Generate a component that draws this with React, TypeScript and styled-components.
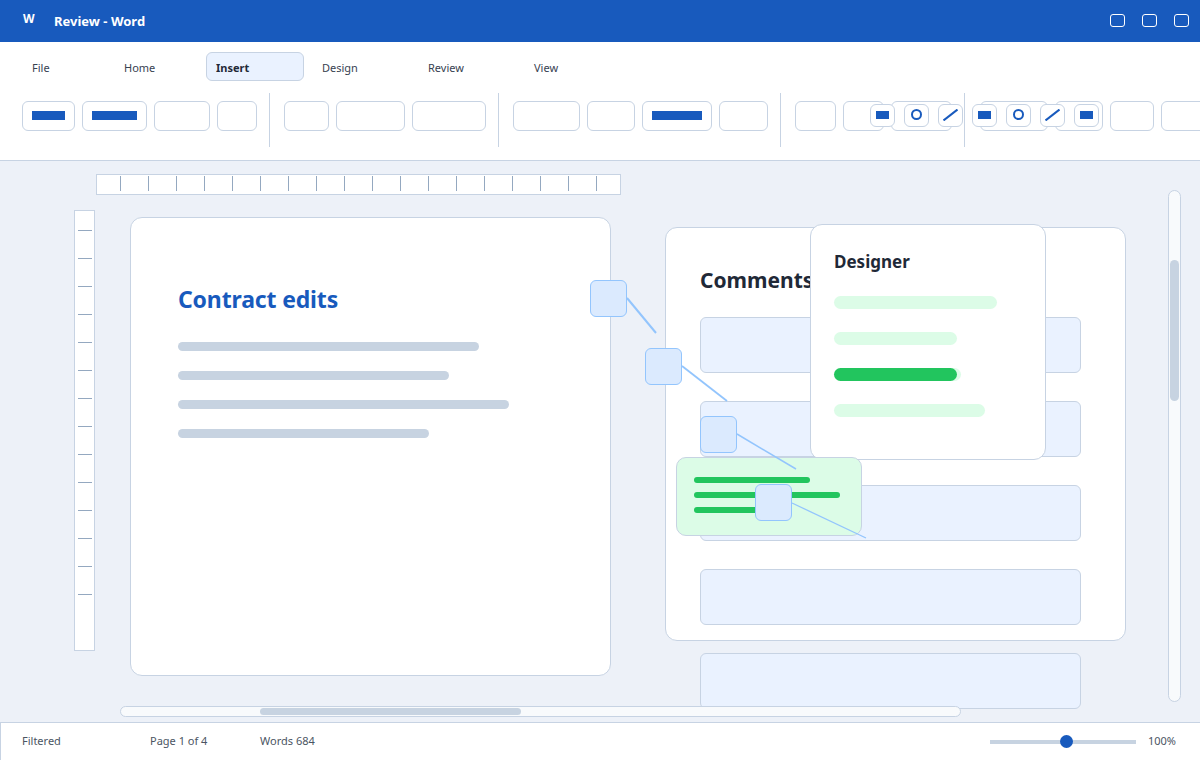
import React from 'react'
import styled, { createGlobalStyle } from 'styled-components'

const GlobalStyle = createGlobalStyle`
  html, body { margin: 0; padding: 0; background: #edf1f8; }
  body { font-family: "Noto Sans", "Open Sans", sans-serif; color: #1f2937; }
  * { box-sizing: border-box; }
`

const line = '#c7d3e3'
const blue = '#185abd'

const Shell = styled.div`
  width: 1200px;
  height: 760px;
  display: flex;
  flex-direction: column;
  overflow: hidden;
  position: relative;
`

const TitleBar = styled.header`
  height: 42px;
  flex: none;
  background: ${blue};
  color: #fff;
  display: flex;
  align-items: center;
  padding: 0 11px 0 23px;
`

const AppMark = styled.span`
  width: 31px;
  font-size: 12px;
  font-weight: 700;
  position: relative;
  top: -3px;
`

const DocTitle = styled.span`
  font-size: 13px;
  font-weight: 700;
  flex: 1;
`

const WindowButtons = styled.div`
  display: flex;
  gap: 17px;
  margin-bottom: 1px;
`

const WindowButton = styled.span`
  width: 15px;
  height: 13px;
  border: 1px solid #fff;
  border-radius: 3px;
`

const Ribbon = styled.section`
  height: 119px;
  flex: none;
  background: #fff;
  border-bottom: 1px solid ${line};
  position: relative;
  overflow: hidden;
`

const Tabs = styled.nav`
  display: flex;
  gap: 8px;
  padding: 10px 0 0 22px;
`

const Tab = styled.div<{ $w: number; $active?: boolean }>`
  width: ${p => p.$w}px;
  height: 29px;
  padding: 2px 9px 0;
  display: flex;
  align-items: center;
  font-size: 11px;
  font-weight: ${p => (p.$active ? 700 : 400)};
  color: ${p => (p.$active ? '#1f2937' : '#374151')};
  background: ${p => (p.$active ? '#eaf2ff' : 'transparent')};
  border: 1px solid ${p => (p.$active ? line : 'transparent')};
  border-radius: 6px;
`

const Tools = styled.div`
  display: flex;
  align-items: flex-start;
  padding: 12px 0 0 22px;
  width: 1300px;
`

const ToolGroup = styled.div`
  display: flex;
  gap: 7px;
  align-items: flex-start;
  height: 54px;
  padding-top: 8px;
`

const Divider = styled.span<{ $l: number; $r: number }>`
  width: 1px;
  height: 54px;
  flex: none;
  background: ${line};
  margin: 0 ${p => p.$r}px 0 ${p => p.$l}px;
`

const ToolButton = styled.div<{ $w: number }>`
  width: ${p => p.$w}px;
  height: 30px;
  flex: none;
  border: 1px solid ${line};
  border-radius: 6px;
  background: #fff;
  display: flex;
  align-items: center;
  padding: 0 0 1px 9px;
`

const ToolBar = styled.span<{ $w: number }>`
  width: ${p => p.$w}px;
  height: 9px;
  background: ${blue};
`

const QuickTools = styled.div`
  position: absolute;
  left: 870px;
  top: 62px;
  display: flex;
  gap: 9px;
`

const QuickTool = styled.div`
  width: 25px;
  height: 23px;
  padding-bottom: 1px;
  border: 1px solid ${line};
  border-radius: 6px;
  background: #fff;
  display: flex;
  align-items: center;
  justify-content: center;
`

const Workspace = styled.main`
  flex: 1;
  position: relative;
  background: #edf1f8;
  padding: 13px 0 0 74px;
  overflow: hidden;
`

const HRuler = styled.div`
  width: 525px;
  height: 21px;
  margin-left: 22px;
  background: #fff;
  border: 1px solid ${line};
  display: flex;
  padding: 1px 0 3px 23px;
  gap: 27px;
`

const HTick = styled.span`
  width: 1px;
  background: #94a8c0;
`

const Desk = styled.div`
  display: flex;
  align-items: flex-start;
  margin-top: 15px;
`

const VRuler = styled.div`
  width: 21px;
  height: 441px;
  background: #fff;
  border: 1px solid ${line};
  display: flex;
  flex-direction: column;
  gap: 27px;
  padding: 19px 2px 0 3px;
`

const VTick = styled.span`
  height: 1px;
  flex: none;
  background: #94a8c0;
`

const Page = styled.article`
  width: 481px;
  height: 459px;
  margin: 7px 0 0 35px;
  background: #fff;
  border: 1px solid ${line};
  border-radius: 12px;
  padding: 65px 47px 0;
`

const PageTitle = styled.h1`
  margin: 0;
  font-size: 23px;
  line-height: 33px;
  font-weight: 700;
  letter-spacing: -0.15px;
  color: ${blue};
`

const TextLines = styled.div`
  display: flex;
  flex-direction: column;
  gap: 20px;
  margin-top: 26px;
`

const TextLine = styled.span<{ $w: number }>`
  width: ${p => p.$w}px;
  height: 9px;
  border-radius: 5px;
  background: #c7d3e1;
`

const CommentsPanel = styled.aside`
  width: 461px;
  height: 414px;
  margin: 17px 0 0 54px;
  background: #fff;
  border: 1px solid ${line};
  border-radius: 12px;
  padding: 36px 34px 0;
`

const PanelTitle = styled.h2`
  margin: 0;
  font-size: 21px;
  line-height: 33px;
  font-weight: 700;
  color: #1f2937;
`

const CommentList = styled.div`
  display: flex;
  flex-direction: column;
  gap: 28px;
  margin-top: 20px;
`

const CommentCard = styled.div`
  width: 381px;
  height: 56px;
  flex: none;
  background: #eaf2ff;
  border: 1px solid ${line};
  border-radius: 6px;
`

const DesignerCard = styled.section`
  position: absolute;
  left: 810px;
  top: 63px;
  width: 236px;
  height: 236px;
  background: #fff;
  border: 1px solid ${line};
  border-radius: 12px;
  padding: 23px 23px 0;
`

const DesignerTitle = styled.h3`
  margin: 0;
  font-size: 17px;
  line-height: 28px;
  font-weight: 700;
  color: #1f2937;
`

const DesignerBars = styled.div`
  display: flex;
  flex-direction: column;
  gap: 23px;
  margin-top: 20px;
`

const DesignerBar = styled.div<{ $w: number }>`
  width: ${p => p.$w}px;
  height: 13px;
  border-radius: 7px;
  background: #dcfce7;
`

const DesignerFill = styled.div<{ $w: number }>`
  width: ${p => p.$w}px;
  height: 13px;
  border-radius: 7px;
  background: #22c55e;
`

const GreenCard = styled.section`
  position: absolute;
  left: 676px;
  top: 296px;
  width: 186px;
  height: 79px;
  background: #dcfce7;
  border: 1px solid ${line};
  border-radius: 10px;
  padding: 19px 17px 0;
  display: flex;
  flex-direction: column;
  gap: 9px;
`

const GreenLine = styled.span<{ $w: number }>`
  width: ${p => p.$w}px;
  height: 6px;
  border-radius: 3px;
  background: #22c55e;
`

const Connectors = styled.svg`
  position: absolute;
  left: 0;
  top: 0;
  pointer-events: none;
`

const Node = styled.div<{ $x: number; $y: number }>`
  position: absolute;
  left: ${p => p.$x}px;
  top: ${p => p.$y}px;
  width: 37px;
  height: 37px;
  background: #dbeafe;
  border: 1px solid #93c5fd;
  border-radius: 6px;
`

const VScroll = styled.div`
  position: absolute;
  left: 1168px;
  top: 29px;
  width: 13px;
  height: 512px;
  background: #f8fafc;
  border: 1px solid ${line};
  border-radius: 7px;
`

const VThumb = styled.div`
  position: absolute;
  left: 1px;
  top: 69px;
  width: 9px;
  height: 141px;
  background: #c7d3e1;
  border-radius: 5px;
`

const HScroll = styled.div`
  position: absolute;
  left: 120px;
  top: 545px;
  width: 841px;
  height: 11px;
  background: #f8fafc;
  border: 1px solid ${line};
  border-radius: 6px;
`

const HThumb = styled.div`
  position: absolute;
  left: 139px;
  top: 1px;
  width: 261px;
  height: 7px;
  background: #c7d3e1;
  border-radius: 4px;
`

const StatusBar = styled.footer`
  height: 38px;
  flex: none;
  background: #fff;
  border-top: 1px solid ${line};
  border-left: 1px solid ${line};
  display: flex;
  align-items: center;
  padding: 0 24px 2px 21px;
  font-size: 11px;
  color: #4b5563;
`

const StatusText = styled.span<{ $w?: number }>`
  width: ${p => (p.$w ? `${p.$w}px` : 'auto')};
`

const Spacer = styled.span`
  flex: 1;
`

const Slider = styled.div`
  width: 146px;
  height: 4px;
  background: #c7d3e1;
  position: relative;
  top: 1px;
  margin-right: 12px;
`

const SliderThumb = styled.span`
  position: absolute;
  left: 70px;
  top: -5px;
  width: 13px;
  height: 13px;
  border-radius: 50%;
  background: ${blue};
`

const RectIcon = () => (
  <svg width="13" height="8" viewBox="0 0 13 8">
    <rect width="13" height="8" fill={blue} />
  </svg>
)

const CircleIcon = () => (
  <svg width="12" height="12" viewBox="0 0 12 12">
    <circle cx="5.5" cy="5.5" r="4.5" fill="none" stroke={blue} strokeWidth="2" />
  </svg>
)

const SlashIcon = () => (
  <svg width="15" height="12" viewBox="0 0 15 12">
    <line x1="0.5" y1="11.5" x2="14.5" y2="0.5" stroke={blue} strokeWidth="2" />
  </svg>
)

const tabs = [
  { label: 'File', w: 84 },
  { label: 'Home', w: 84 },
  { label: 'Insert', w: 98, active: true },
  { label: 'Design', w: 98 },
  { label: 'Review', w: 98 },
  { label: 'View', w: 98 },
]

// each tool is [button width, width of the filled bar]
const toolGroups: { tools: number[][]; l: number; r: number }[] = [
  { tools: [[53, 33], [65, 45], [56, 0], [40, 0]], l: 12, r: 14 },
  { tools: [[45, 0], [69, 0], [74, 0]], l: 12, r: 14 },
  { tools: [[67, 0], [48, 0], [70, 50], [49, 0]], l: 12, r: 14 },
  { tools: [[41, 0], [41, 0], [61, 0]], l: 12, r: 15 },
  { tools: [[68, 0], [48, 0], [44, 0], [60, 0]], l: 0, r: 0 },
]

const nodes = [
  [590, 119],
  [645, 187],
  [700, 255],
  [755, 323],
]

const App = () => {
  return (
    <Shell>
      <GlobalStyle />
      <TitleBar>
        <AppMark>W</AppMark>
        <DocTitle>Review - Word</DocTitle>
        <WindowButtons>
          <WindowButton />
          <WindowButton />
          <WindowButton />
        </WindowButtons>
      </TitleBar>

      <Ribbon>
        <Tabs>
          {tabs.map(tab => (
            <Tab key={tab.label} $w={tab.w} $active={tab.active}>
              {tab.label}
            </Tab>
          ))}
        </Tabs>
        <Tools>
          {toolGroups.map((group, i) => (
            <React.Fragment key={i}>
              <ToolGroup>
                {group.tools.map(([w, bar], j) => (
                  <ToolButton key={j} $w={w}>
                    {bar > 0 && <ToolBar $w={bar} />}
                  </ToolButton>
                ))}
              </ToolGroup>
              {i < toolGroups.length - 1 && <Divider $l={group.l} $r={group.r} />}
            </React.Fragment>
          ))}
        </Tools>
        <QuickTools>
          <QuickTool><RectIcon /></QuickTool>
          <QuickTool><CircleIcon /></QuickTool>
          <QuickTool><SlashIcon /></QuickTool>
          <QuickTool><RectIcon /></QuickTool>
          <QuickTool><CircleIcon /></QuickTool>
          <QuickTool><SlashIcon /></QuickTool>
          <QuickTool><RectIcon /></QuickTool>
        </QuickTools>
      </Ribbon>

      <Workspace>
        <HRuler>
          {Array.from({ length: 18 }, (_, i) => (
            <HTick key={i} />
          ))}
        </HRuler>
        <Desk>
          <VRuler>
            {Array.from({ length: 14 }, (_, i) => (
              <VTick key={i} />
            ))}
          </VRuler>
          <Page>
            <PageTitle>Contract edits</PageTitle>
            <TextLines>
              <TextLine $w={301} />
              <TextLine $w={271} />
              <TextLine $w={331} />
              <TextLine $w={251} />
            </TextLines>
          </Page>
          <CommentsPanel>
            <PanelTitle>Comments</PanelTitle>
            <CommentList>
              <CommentCard />
              <CommentCard />
              <CommentCard />
              <CommentCard />
              <CommentCard />
            </CommentList>
          </CommentsPanel>
        </Desk>

        <DesignerCard>
          <DesignerTitle>Designer</DesignerTitle>
          <DesignerBars>
            <DesignerBar $w={163} />
            <DesignerBar $w={123} />
            <DesignerBar $w={127}>
              <DesignerFill $w={123} />
            </DesignerBar>
            <DesignerBar $w={151} />
          </DesignerBars>
        </DesignerCard>

        <GreenCard>
          <GreenLine $w={116} />
          <GreenLine $w={146} />
          <GreenLine $w={80} />
        </GreenCard>

        <Connectors width="1200" height="561" viewBox="0 0 1200 561">
          <line x1="627" y1="137" x2="656" y2="172" stroke="#93c5fd" strokeWidth="2" />
          <line x1="682" y1="205" x2="727" y2="240" stroke="#93c5fd" strokeWidth="1.8" />
          <line x1="737" y1="273" x2="796" y2="308" stroke="#93c5fd" strokeWidth="1.5" />
          <line x1="792" y1="342" x2="866" y2="377" stroke="#93c5fd" strokeWidth="1.3" />
        </Connectors>

        {nodes.map(([x, y]) => (
          <Node key={x} $x={x} $y={y} />
        ))}

        <VScroll>
          <VThumb />
        </VScroll>
        <HScroll>
          <HThumb />
        </HScroll>
      </Workspace>

      <StatusBar>
        <StatusText $w={128}>Filtered</StatusText>
        <StatusText $w={110}>Page 1 of 4</StatusText>
        <StatusText>Words 684</StatusText>
        <Spacer />
        <Slider>
          <SliderThumb />
        </Slider>
        <StatusText>100%</StatusText>
      </StatusBar>
    </Shell>
  )
}

export default App
